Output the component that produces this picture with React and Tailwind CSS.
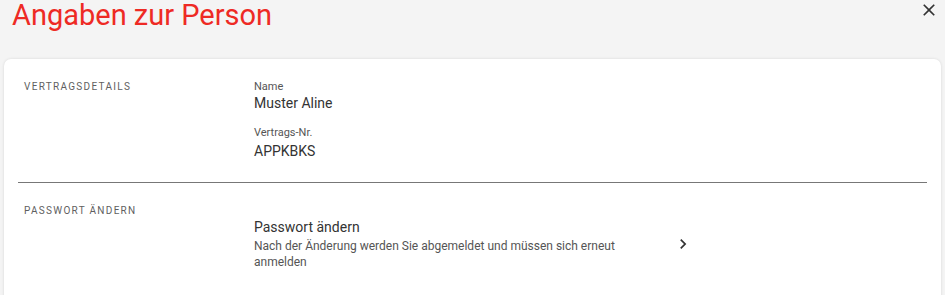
export default function App() {
  return (
    <div className="h-[295px] bg-[#f4f4f4] font-['Roboto',sans-serif] text-[#333333] overflow-hidden">
      <div className="flex items-start justify-between pl-[12px] pr-[6px]">
        <h1 className="text-[29px] leading-[30px] text-[#ee2a24] font-normal">Angaben zur Person</h1>
        <button className="w-5 h-5 text-[#333333]" aria-label="Schliessen">
          <svg viewBox="0 0 24 24" width="20" height="20" fill="currentColor">
            <path d="M19 6.41 17.59 5 12 10.59 6.41 5 5 6.41 10.59 12 5 17.59 6.41 19 12 13.41 17.59 19 19 17.59 13.41 12z" />
          </svg>
        </button>
      </div>

      <main className="mt-[29px] mx-[4px] bg-white rounded-[7px] shadow-[0_0_3px_rgba(0,0,0,0.12)] px-[14px] pb-[40px]">
        {/* Vertragsdetails */}
        <section className="flex pl-[6px] pt-5 pb-[22px] border-b border-[#777777]">
          <h2 className="w-[230px] shrink-0 text-[10px] leading-4 font-normal tracking-[1.3px] text-[#5f5f5f] uppercase">
            Vertragsdetails
          </h2>
          <div className="flex flex-col">
            <span className="text-[11px] leading-[14px] text-[#555555] mt-[1px]">Name</span>
            <span className="text-[14px] leading-[18px]">Muster Aline</span>
            <span className="text-[11px] leading-[14px] text-[#555555] mt-[14px]">Vertrags-Nr.</span>
            <span className="text-[14px] leading-[18px] mt-[2px]">APPKBKS</span>
          </div>
        </section>

        {/* Passwort */}
        <section className="flex pl-[6px] pt-5">
          <h2 className="w-[230px] shrink-0 text-[10px] leading-4 font-normal tracking-[1.3px] text-[#5f5f5f] uppercase">
            Passwort ändern
          </h2>
          <button className="flex items-center mt-[14px] text-left">
            <div className="w-[400px] flex flex-col">
              <span className="text-[14px] leading-5">Passwort ändern</span>
              <span className="text-[12px] leading-4 mt-[1px] text-[#555555]">
                Nach der Änderung werden Sie abgemeldet und müssen sich erneut anmelden
              </span>
            </div>
            <svg viewBox="0 0 24 24" width="20" height="20" fill="#333333" className="ml-[19px] shrink-0">
              <path d="M10 6 8.59 7.41 13.17 12l-4.58 4.59L10 18l6-6z" />
            </svg>
          </button>
        </section>
      </main>
    </div>
  );
}
